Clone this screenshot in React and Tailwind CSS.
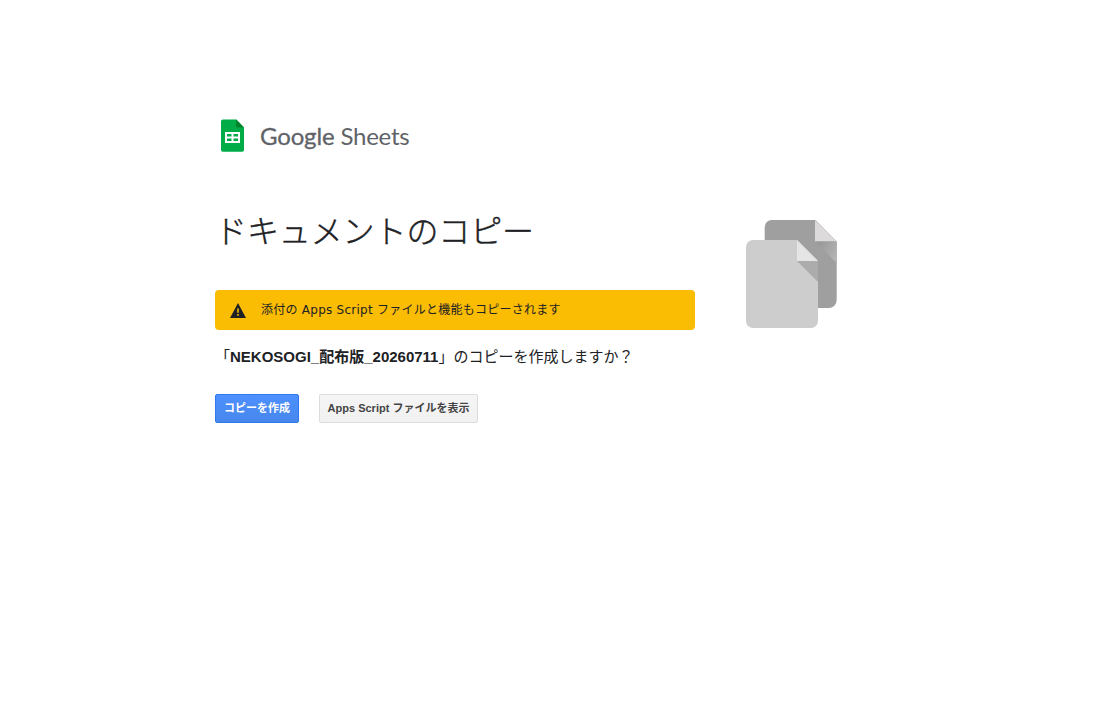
function SheetsIcon() {
  return (
    <svg className="block shrink-0" width="24" height="33" viewBox="0 0 24 33">
      <path d="M2 .5h13.500l7.500 8V31a1.700 1.700 0 0 1-1.700 1.700H1.700A1.700 1.700 0 0 1 0 31V2.500a2 2 0 0 1 2-2z" fill="#00ac47" />
      <path d="M15 .5l8 8h-6.500a1.500 1.500 0 0 1-1.500-1.500z" fill="#00832d" />
      <path
        d="M4 13h15v11H4zM6 15v2.500h4.500V15zM12.500 15v2.500H17V15zM6 19.500V22h4.500v-2.500zM12.500 19.500V22H17v-2.500z"
        fill="#fff"
        fillRule="evenodd"
      />
    </svg>
  );
}

function WarningIcon() {
  return (
    <svg className="block shrink-0" width="16" height="15" viewBox="0 0 16 15">
      <path d="M8 0l8 15H0zM7.200 5.500v4.200h1.600V5.500zM7.200 11v1.800h1.600V11z" fill="#202124" fillRule="evenodd" />
    </svg>
  );
}

function CopyPicture() {
  return (
    <svg className="block" width="91" height="108" viewBox="0 0 91 108">
      <defs>
        <linearGradient id="fold" x1="0" y1="0" x2="1" y2="0.6">
          <stop offset="0.2" stopColor="#999" />
          <stop offset="1" stopColor="#b3b3b3" />
        </linearGradient>
      </defs>
      <path d="M26 0h43.500L90.700 21.500V80a8 8 0 0 1-8 8H18.700V7a7 7 0 0 1 7-7z" fill="#9f9f9f" />
      <path d="M69 0l21.700 21.500H69z" fill="#dcdada" />
      <path d="M69 21.500h21.700V43z" fill="url(#fold)" />
      <path d="M7 20h44l21 21v60a7 7 0 0 1-7 7H7a7 7 0 0 1-7-7V27a7 7 0 0 1 7-7z" fill="#cdcdcd" />
      <path d="M51 20l21 21H51z" fill="#e5e5e5" />
      <path d="M51 41h21v21z" fill="#acacac" />
    </svg>
  );
}

function App() {
  return (
    <main className="flex min-h-screen items-start bg-white pt-[119px] pl-[215px] font-['Liberation_Sans','Noto_Sans_CJK_JP',sans-serif] text-[#202124]">
      <section className="w-[480px]">
        <div className="flex h-[33px] items-start pl-1.5">
          <SheetsIcon />
          <div className="ml-[15px] flex h-[34px] items-center gap-[6px] font-['Lato',sans-serif] text-[24px] text-[#5f6368]">
            <span className="tracking-[-0.15px] [-webkit-text-stroke:0.3px_#5f6368]">Google</span>
            <span className="tracking-[-0.25px]">Sheets</span>
          </div>
        </div>

        <h1 className="mt-[53px] h-[48px] font-['Noto_Sans_CJK_JP',sans-serif] text-[32px] leading-[48px] font-light tracking-[-0.1px] whitespace-nowrap [-webkit-text-stroke:0.4px_#202124]">
          ドキュメントのコピー
        </h1>

        <div className="mt-[37px] flex h-10 items-center rounded bg-[#fbbc04] pl-[15px]">
          <WarningIcon />
          <p className="ml-[15px] font-['DejaVu_Sans','Noto_Sans_CJK_JP',sans-serif] text-[12px] tracking-[0.25px] whitespace-nowrap">
            添付の Apps Script ファイルと機能もコピーされます
          </p>
        </div>

        <p className="mt-[15px] text-[15px] leading-[24px] whitespace-nowrap">
          「<b>NEKOSOGI_配布版_20260711</b>」のコピーを作成しますか？
        </p>

        <div className="mt-[25px] flex gap-5 text-[11px] font-bold">
          <button className="h-[29px] w-[84px] rounded-[2px] border border-[#3079ed] bg-linear-to-b from-[#4d90fe] to-[#4787ed] whitespace-nowrap text-white">
            コピーを作成
          </button>
          <button className="h-[29px] w-[159px] rounded-[2px] border border-[#dcdcdc] bg-linear-to-b from-[#f5f5f5] to-[#f1f1f1] whitespace-nowrap text-[#444]">
            Apps Script ファイルを表示
          </button>
        </div>
      </section>

      <div className="mt-[101px] ml-[51px]">
        <CopyPicture />
      </div>
    </main>
  );
}

export default App;
